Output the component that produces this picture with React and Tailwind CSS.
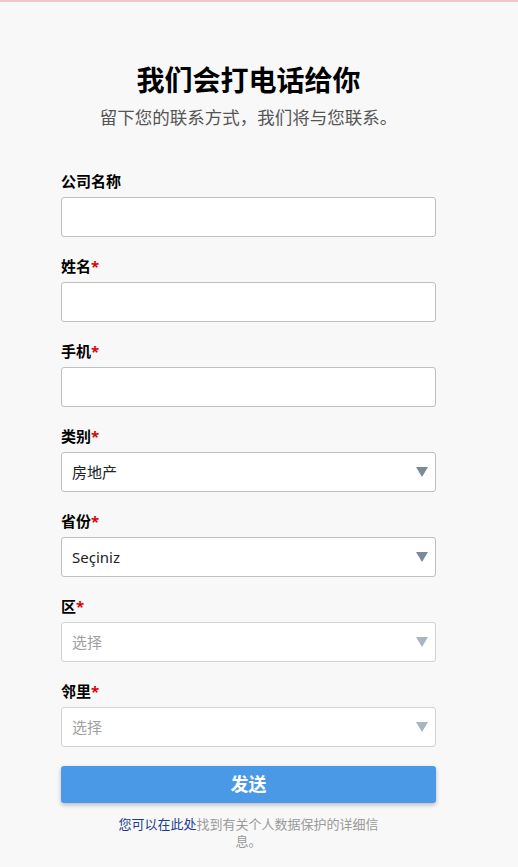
import { useState } from 'react'

const fields = [
  { name: 'company', label: '公司名称', type: 'text' },
  { name: 'name', label: '姓名', type: 'text', required: true },
  { name: 'phone', label: '手机', type: 'text', required: true },
  { name: 'category', label: '类别', type: 'select', required: true, options: ['房地产'] },
  { name: 'province', label: '省份', type: 'select', required: true, options: ['Seçiniz'] },
  { name: 'district', label: '区', type: 'select', required: true, options: ['选择'], disabled: true },
  { name: 'neighbourhood', label: '邻里', type: 'select', required: true, options: ['选择'], disabled: true },
]

function Arrow({ disabled }) {
  return (
    <svg
      width="12"
      height="10"
      viewBox="0 0 12 10"
      className="pointer-events-none absolute right-[8px] top-1/2 -translate-y-1/2"
    >
      <path d="M0 0 L12 0 L6 10 Z" fill={disabled ? '#a9b5c1' : '#7b8a99'} />
    </svg>
  )
}

function Field({ field }) {
  const [value, setValue] = useState('')
  return (
    <div className="flex flex-col">
      <label className="mb-[6px] h-[20px] text-[15px] leading-[20px] font-bold text-black">
        {field.label}
        {field.required && <span className="text-[#e00000]">*</span>}
      </label>
      {field.type === 'select' ? (
        <div className="relative">
          <select
            disabled={field.disabled}
            className={`h-[40px] w-full appearance-none rounded-[3px] border bg-white pl-[10px] pr-8 text-[15px] outline-none ${
              field.disabled ? 'border-[#d2d2d2] text-[#a0a0a0]' : 'border-[#bfbfbf] text-[#222]'
            }`}
          >
            {field.options.map((o) => (
              <option key={o}>{o}</option>
            ))}
          </select>
          <Arrow disabled={field.disabled} />
        </div>
      ) : (
        <input
          type="text"
          value={value}
          onChange={(e) => setValue(e.target.value)}
          className="h-[40px] w-full rounded-[3px] border border-[#bfbfbf] bg-white px-[10px] text-[15px] text-[#222] outline-none"
        />
      )}
    </div>
  )
}

export default function App() {
  return (
    <div
      className="min-h-[867px] bg-[#f8f8f8] border-t-2 border-[#f2c4cc]"
      style={{ fontFamily: '"Noto Sans", "Noto Sans CJK SC", sans-serif' }}
    >
      <div className="w-[497px]">
        <div className="mx-auto w-[375px] pt-[60px] pb-6">
          <h1 className="text-center text-[28px] leading-[36px] font-bold text-black">我们会打电话给你</h1>
          <p className="mt-[7px] text-center text-[17.5px] leading-[24px] text-[#555]">
            留下您的联系方式，我们将与您联系。
          </p>

          <form className="mt-[42px] flex flex-col gap-[19px]" onSubmit={(e) => e.preventDefault()}>
            {fields.map((f) => (
              <Field key={f.name} field={f} />
            ))}
            <button
              type="submit"
              className="h-[37px] w-full rounded-[3px] bg-[#4a99e6] text-[18px] font-bold text-white shadow-[0_2px_4px_rgba(0,0,0,0.25)]"
            >
              发送
            </button>
          </form>

          <p className="mx-auto mt-[13px] w-[262px] text-center text-[13px] leading-[17px] text-[#9a9a9a]">
            <a href="#" className="text-[#1a3c8c]">您可以在此处</a>找到有关个人数据保护的详细信息。
          </p>
        </div>
      </div>
    </div>
  )
}
